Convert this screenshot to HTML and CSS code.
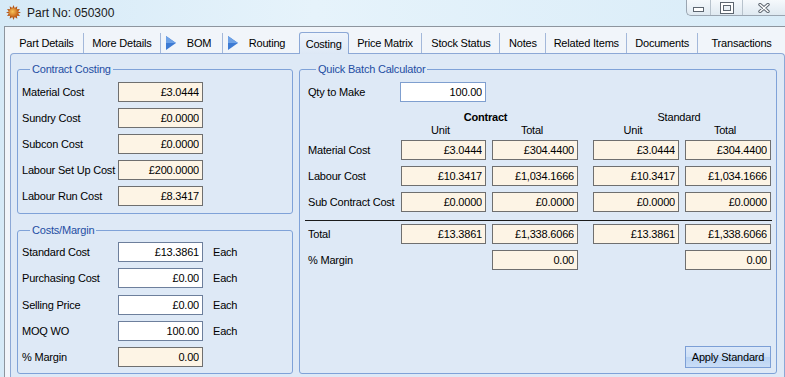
FILE: index.html
```html
<!doctype html>
<html>
<head>
<meta charset="utf-8">
<title>Part No: 050300</title>
<link rel="stylesheet" href="styles.css">
</head>
<body>
<div class="titlebar">
    <svg class="appicon" width="15" height="15" viewBox="0 0 15 15">
        <defs>
            <radialGradient id="sun" cx="0.4" cy="0.4" r="0.6">
                <stop offset="0" stop-color="#f7c35a"/>
                <stop offset="1" stop-color="#c8651a"/>
            </radialGradient>
        </defs>
        <polygon fill="#b5581a" points="7.5,0 8.7,3 11.3,1.2 10.9,4.3 14,4 12.1,6.5 15,7.5 12.1,8.5 14,11 10.9,10.7 11.3,13.8 8.7,12 7.5,15 6.3,12 3.7,13.8 4.1,10.7 1,11 2.9,8.5 0,7.5 2.9,6.5 1,4 4.1,4.3 3.7,1.2 6.3,3"/>
        <circle cx="7.5" cy="7.5" r="4.6" fill="url(#sun)"/>
    </svg>
    <span class="title">Part No: 050300</span>
    <div class="winbtns">
        <span class="wb min"><i></i></span>
        <span class="wb max"><i></i></span>
        <span class="wb close">
            <svg width="12" height="10" viewBox="0 0 12 10">
                <path d="M2 1.5 L10 8.5 M10 1.5 L2 8.5" stroke="#5d6670" stroke-width="3.4" stroke-linecap="round"/>
                <path d="M2 1.5 L10 8.5 M10 1.5 L2 8.5" stroke="#fff" stroke-width="1.4" stroke-linecap="round"/>
            </svg>
        </span>
    </div>
</div>
<div class="window">
    <div class="tabs">
        <div class="tab t1">Part Details</div>
        <div class="tab t2">More Details</div>
        <div class="tab t3 arrowtab">
            <svg class="arrow" width="10" height="14" viewBox="0 0 10 14"><polygon points="0,0 10,7 0,14" fill="#3d7bd4"/><polygon points="0,0 10,7 0,7" fill="#6ea2e6"/></svg>
            <span>BOM</span>
        </div>
        <div class="tab t4 arrowtab">
            <svg class="arrow" width="10" height="14" viewBox="0 0 10 14"><polygon points="0,0 10,7 0,14" fill="#3d7bd4"/><polygon points="0,0 10,7 0,7" fill="#6ea2e6"/></svg>
            <span>Routing</span>
        </div>
        <div class="tab t5 active">Costing</div>
        <div class="tab t6 after">Price Matrix</div>
        <div class="tab t7">Stock Status</div>
        <div class="tab t8">Notes</div>
        <div class="tab t9">Related Items</div>
        <div class="tab t10">Documents</div>
        <div class="tab t11">Transactions</div>
    </div>
    <div class="page">
        <div class="leftcol">
            <fieldset class="group contract">
                <legend>Contract Costing</legend>
                <div class="rows">
                    <label>Material Cost</label><input class="ro" readonly value="£3.0444">
                    <label>Sundry Cost</label><input class="ro" readonly value="£0.0000">
                    <label>Subcon Cost</label><input class="ro" readonly value="£0.0000">
                    <label>Labour Set Up Cost</label><input class="ro" readonly value="£200.0000">
                    <label>Labour Run Cost</label><input class="ro" readonly value="£8.3417">
                </div>
            </fieldset>
            <fieldset class="group costs">
                <legend>Costs/Margin</legend>
                <div class="rows each">
                    <label>Standard Cost</label><input class="ed" value="£13.3861"><span>Each</span>
                    <label>Purchasing Cost</label><input class="ed" value="£0.00"><span>Each</span>
                    <label>Selling Price</label><input class="ed" value="£0.00"><span>Each</span>
                    <label>MOQ WO</label><input class="ed" value="100.00"><span>Each</span>
                    <label>% Margin</label><input class="ro" readonly value="0.00"><span></span>
                </div>
            </fieldset>
        </div>
        <fieldset class="group batch">
            <legend>Quick Batch Calculator</legend>
            <div class="qty">
                <label>Qty to Make</label><input class="ed blue" value="100.00">
            </div>
            <div class="calc head">
                <span></span><b class="span2">Contract</b><span></span><span class="span2b">Standard</span>
                <span></span><span>Unit</span><span>Total</span><span></span><span>Unit</span><span>Total</span>
            </div>
            <div class="calc body">
                <label>Material Cost</label><input class="ro" readonly value="£3.0444"><input class="ro" readonly value="£304.4400"><span></span><input class="ro" readonly value="£3.0444"><input class="ro" readonly value="£304.4400">
                <label>Labour Cost</label><input class="ro" readonly value="£10.3417"><input class="ro" readonly value="£1,034.1666"><span></span><input class="ro" readonly value="£10.3417"><input class="ro" readonly value="£1,034.1666">
                <label>Sub Contract Cost</label><input class="ro" readonly value="£0.0000"><input class="ro" readonly value="£0.0000"><span></span><input class="ro" readonly value="£0.0000"><input class="ro" readonly value="£0.0000">
                <div class="rule"></div>
                <label>Total</label><input class="ro" readonly value="£13.3861"><input class="ro" readonly value="£1,338.6066"><span></span><input class="ro" readonly value="£13.3861"><input class="ro" readonly value="£1,338.6066">
                <label>% Margin</label><span></span><input class="ro" readonly value="0.00"><span></span><span></span><input class="ro" readonly value="0.00">
            </div>
            <div class="actions">
                <button type="button">Apply Standard</button>
            </div>
        </fieldset>
    </div>
</div>
</body>
</html>
```

FILE: styles.css
```css
html, body {
	margin: 0;
	height: 100%;
	overflow: hidden;
}
body {
	font: 11px "Liberation Sans", Arial, sans-serif;
	letter-spacing: -0.2px;
	color: #000;
	background: linear-gradient(90deg, #d6eaf7 0%, #e6f3fb 40%, #d9ecf8 100%);
}
.titlebar {
	height: 26px;
	display: flex;
	align-items: flex-start;
}
.appicon {
	margin: 5px 0 0 6px;
}
.title {
	margin: 6px 0 0 6px;
	font-size: 12px;
	letter-spacing: 0;
	color: #1a1a1a;
}
.winbtns {
	margin-left: auto;
	display: flex;
	height: 15px;
	border: 1px solid #9aa5b1;
	border-top: none;
	border-right: none;
	border-radius: 0 0 0 5px;
	background: linear-gradient(#f5f9fc, #dfe9f1);
}
.wb {
	display: flex;
	align-items: center;
	justify-content: center;
	border-left: 1px solid #b7c2cc;
}
.wb.min {
	width: 23px;
	border-left: none;
}
.wb.max {
	width: 31px;
}
.wb.close {
	width: 42px;
}
.wb.min i {
	display: block;
	width: 9px;
	height: 3px;
	margin-top: 4px;
	border: 1px solid #5d6670;
	background: #fff;
}
.wb.max i {
	display: block;
	width: 6px;
	height: 4px;
	border: 1px solid #5d6670;
	box-shadow: 0 0 0 2px #fff, 0 0 0 3px #5d6670;
}
.window {
	margin-left: 4px;
	height: calc(100% - 27px);
	border-top: 1px solid #8d959e;
	border-left: 1px solid #8d959e;
	background: #f1f5fa;
	display: flex;
	flex-direction: column;
}
.tabs {
	height: 26px;
	padding-left: 5px;
	display: flex;
	align-items: flex-end;
	flex-shrink: 0;
}
.tab {
	box-sizing: border-box;
	height: 20px;
	line-height: 20px;
	text-align: center;
	border-left: 1px solid #a3b8da;
	white-space: nowrap;
}
.t1 { width: 73px; border-left: none; }
.t2 { width: 77px; }
.t3 { width: 62px; }
.t4 { width: 77px; }
.t5 { width: 50px; }
.t6 { width: 73px; }
.t7 { width: 78px; }
.t8 { width: 46px; }
.t9 { width: 81px; }
.t10 { width: 71px; }
.t11 { width: 88px; }
.arrowtab {
	display: flex;
	align-items: center;
	padding-left: 5px;
	text-align: left;
}
.arrowtab span {
	margin-left: 11px;
}
.tab.active {
	height: 22px;
	line-height: 22px;
	margin-bottom: -1px;
	border: 1px solid #8ca8d6;
	border-bottom: none;
	border-radius: 3px 3px 0 0;
	background: linear-gradient(#eef4fc, #dde8f5);
	position: relative;
	z-index: 1;
}
.tab.after {
	border-left: none;
}
.page {
	flex: 1;
	margin-left: 5px;
	border: 1px solid #8ca8d6;
	border-bottom: none;
	border-radius: 4px 4px 0 0;
	background: #dee9f6;
	padding: 9px 4px 0 6px;
	display: flex;
	gap: 6px;
	align-items: flex-start;
}
.leftcol {
	width: 276px;
	display: flex;
	flex-direction: column;
	gap: 10px;
}
fieldset.group {
	box-sizing: border-box;
	margin: 0;
	min-width: 0;
	border: 1px solid #7fa2d8;
	border-radius: 3px;
	padding: 0;
}
.group legend {
	margin-left: 8px;
	padding: 0 2px;
	line-height: 13px;
	color: #1f4ea3;
}
.contract {
	height: 151px;
	padding: 6px 0 0 4px !important;
}
.costs {
	height: 150px;
	padding: 5px 0 0 4px !important;
}
.rows {
	display: grid;
	grid-template-columns: 96px 85px;
	grid-auto-rows: 20px;
	row-gap: 6px;
	align-items: center;
}
.rows.each {
	grid-template-columns: 96px 85px auto;
	row-gap: 6.3px;
}
.rows.each span {
	margin-left: 10px;
}
label {
	white-space: nowrap;
}
input {
	box-sizing: border-box;
	height: 20px;
	width: 100%;
	margin: 0;
	padding: 0 3px 0 2px;
	font: 11px "Liberation Sans", Arial, sans-serif;
	letter-spacing: -0.2px;
	color: #000;
	text-align: right;
	outline: none;
}
input.ro {
	background: #fdf4e5;
	border: 1px solid #6f6f6f;
}
input.ed {
	background: #fff;
	border: 1px solid #6d7f9c;
}
input.ed.blue {
	border-color: #7f9fcf;
}
.batch {
	width: 478px;
	height: 311px;
	padding: 6px 0 0 8px !important;
}
.qty {
	display: flex;
	align-items: center;
	height: 20px;
}
.qty label {
	width: 92px;
}
.qty input {
	width: 86px;
}
.calc {
	display: grid;
	grid-template-columns: 87px 85px 86px 3px 86px 86px;
	column-gap: 6px;
	width: 463px;
}
.calc.head {
	margin: 9px 0 3px;
	grid-auto-rows: 13px;
	line-height: 13px;
	text-align: center;
}
.calc.head b {
	font-weight: bold;
}
.span2 {
	grid-column: 2 / 4;
	padding-right: 8px;
}
.span2b {
	grid-column: 5 / 7;
	padding-right: 6px;
}
.calc.head span {
	padding-right: 6px;
}
.calc.body {
	grid-template-rows: 20px 20px 20px 0 20px 20px;
	row-gap: 6px;
	align-items: center;
}
.rule {
	grid-column: 1 / -1;
	align-self: start;
	height: 1px;
	background: #1b1b1b;
	margin: 2px -1px 0 -3px;
}
.actions {
	width: 463px;
	margin-top: 76px;
	display: flex;
	justify-content: flex-end;
}
button {
	width: 86px;
	height: 22px;
	padding: 0;
	font: 11px "Liberation Sans", Arial, sans-serif;
	letter-spacing: -0.2px;
	color: #000;
	border: 1px solid #7c9fd6;
	background: linear-gradient(#dbe8f9 0%, #cde0f7 50%, #b9d3f3 51%, #c9ddf6 100%);
}
```
